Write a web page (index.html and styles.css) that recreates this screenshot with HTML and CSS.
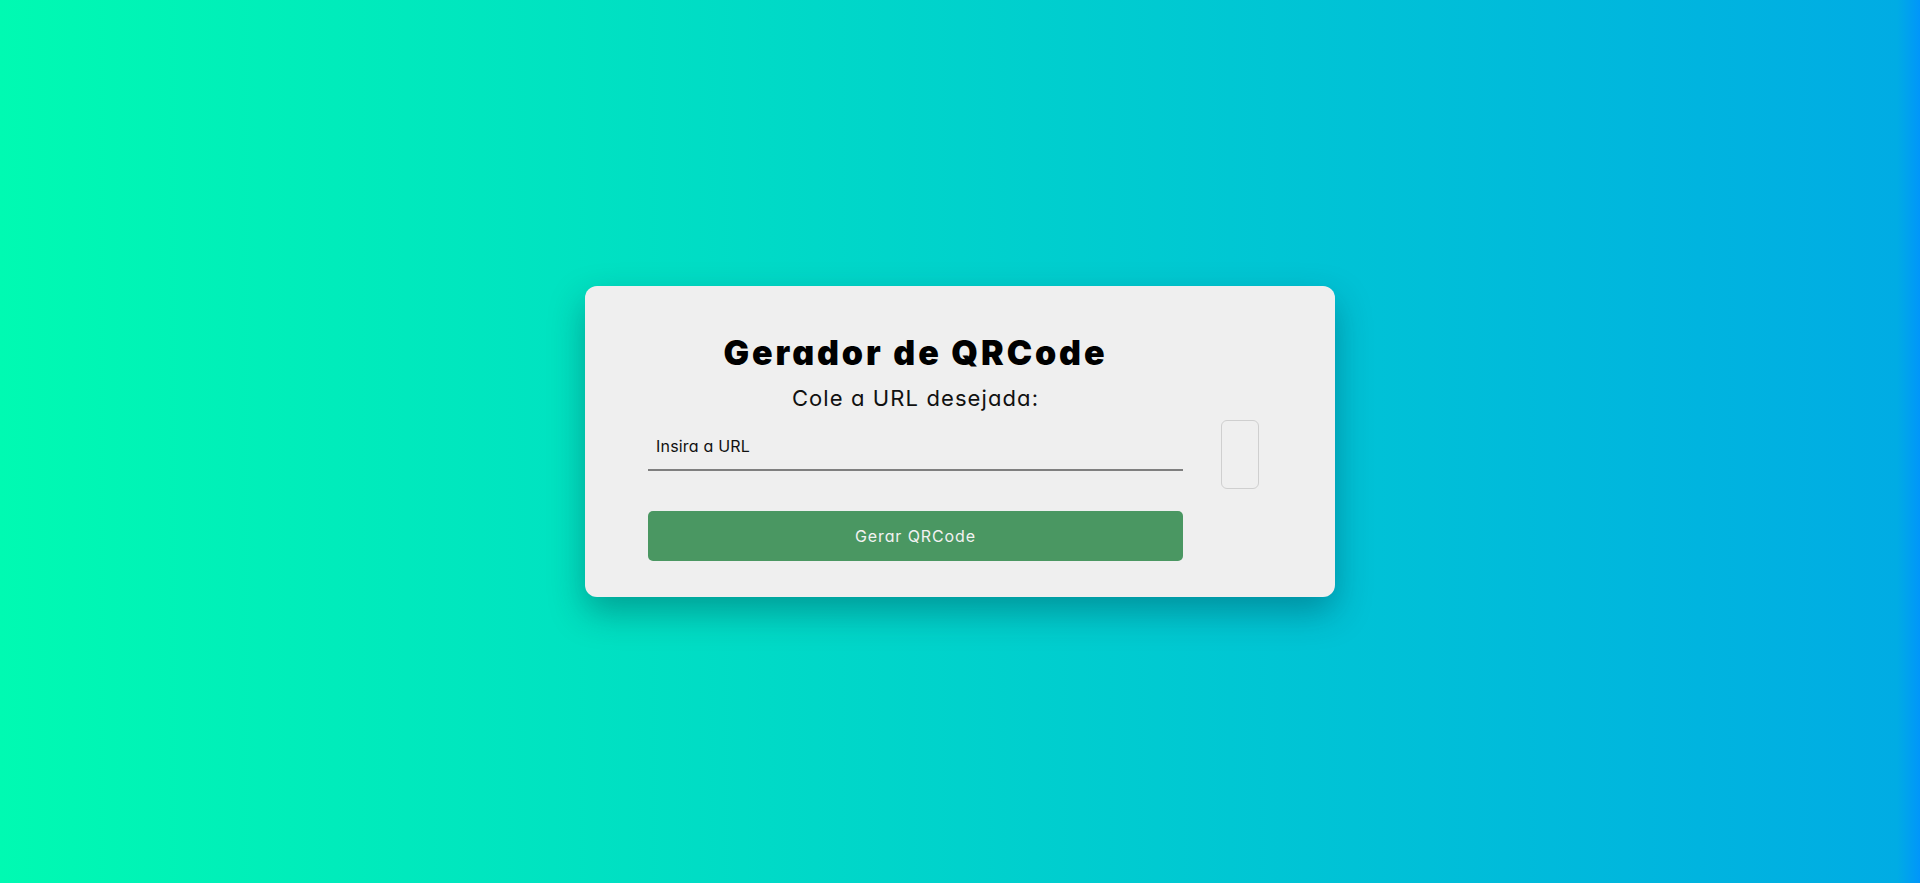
FILE: index.html
```html
<!DOCTYPE html>
<html lang="pt-BR">
<head>
<meta charset="utf-8">
<title>Gerador de QRCode</title>
<link rel="stylesheet" href="styles.css">
</head>
<body>
  <main class="card">
    <section class="form-col">
      <h1 class="title">Gerador de QRCode</h1>
      <p class="subtitle">Cole a URL desejada:</p>
      <input class="url-input" type="text" placeholder="Insira a URL">
      <button class="gen-btn" type="button">Gerar QRCode</button>
    </section>
    <div class="qr-box"></div>
  </main>
</body>
</html>
```
FILE: styles.css
```css
* { box-sizing: border-box; }

html, body {
  margin: 0;
  height: 100%;
}

body {
  font-family: Inter, "Noto Sans", sans-serif;
  font-feature-settings: "cv11";
  background: linear-gradient(to right, #00fab2 0%, #00d2cc 50%, #00ace4 98.8%, #0096fa 100%);
  display: flex;
  align-items: center;
  justify-content: center;
}

.card {
  width: 750px;
  height: 311px;
  background: #efefef;
  border-radius: 12px;
  box-shadow: 0 15px 35px rgba(0, 40, 60, 0.35);
  display: flex;
  align-items: flex-start;
  gap: 38px;
  padding: 47px 76px 36px 63px;
}

.form-col {
  width: 535px;
  display: flex;
  flex-direction: column;
}

.title {
  margin: 0;
  font-size: 34px;
  line-height: 40px;
  font-weight: 900;
  letter-spacing: 2.9px;
  color: #000;
  text-align: center;
}

.subtitle {
  margin: 11px 0 0;
  font-size: 22px;
  line-height: 28px;
  font-weight: 400;
  letter-spacing: 1.1px;
  color: #111;
  text-align: center;
}

.url-input {
  margin-top: 11px;
  height: 48px;
  width: 100%;
  border: none;
  border-bottom: 2px solid #7f7f7f;
  background: transparent;
  padding: 0 8px;
  font-family: inherit;
  font-feature-settings: "cv11";
  font-size: 16px;
  letter-spacing: 0.2px;
  color: #111;
  outline: none;
}

.url-input::placeholder {
  color: #111;
  opacity: 1;
}

.gen-btn {
  margin-top: 40px;
  height: 50px;
  width: 100%;
  border: none;
  border-radius: 5px;
  background: #4a9762;
  color: #f2f2f2;
  font-family: inherit;
  font-feature-settings: "cv11";
  font-size: 16px;
  letter-spacing: 0.9px;
  cursor: pointer;
}

.qr-box {
  margin-top: 87px;
  width: 38px;
  height: 69px;
  border: 1px solid #cfcfcf;
  border-radius: 6px;
}
```
